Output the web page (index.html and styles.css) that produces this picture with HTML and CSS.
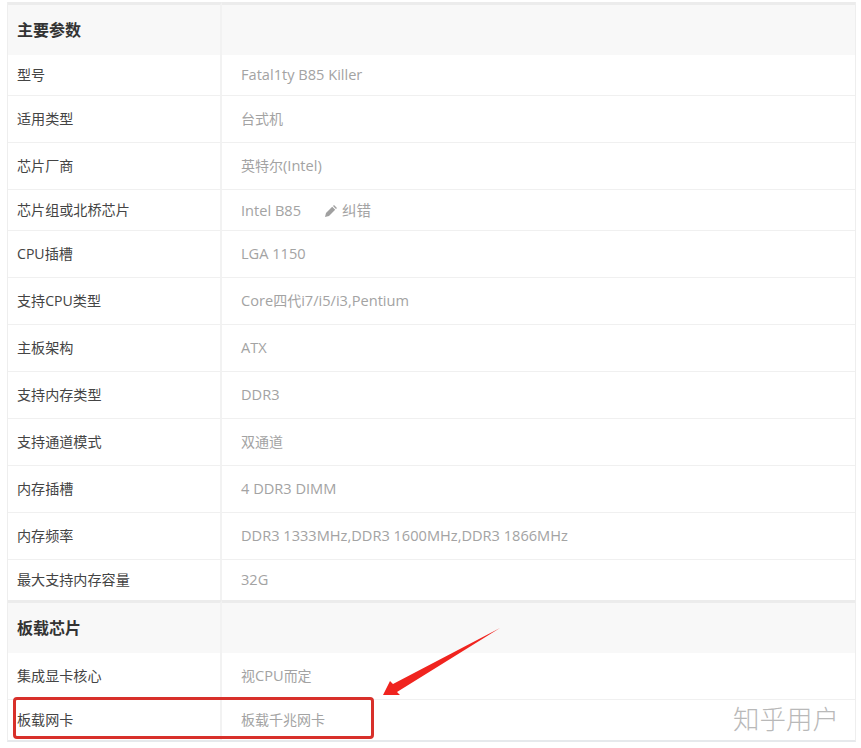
FILE: index.html
```html
<!DOCTYPE html>
<html lang="zh-CN">
<head>
<meta charset="utf-8">
<title>主要参数</title>
<link rel="stylesheet" href="styles.css">
</head>
<body>
<div class="sheet">
  <table class="spec">
    <tbody class="group">
      <tr class="head"><th>主要参数</th><td></td></tr>
      <tr class="h41"><th>型号</th><td>Fatal1ty B85 Killer</td></tr>
      <tr class="h47"><th>适用类型</th><td><span class="cn">台式机</span></td></tr>
      <tr class="h47"><th>芯片厂商</th><td><span class="cn">英特尔</span>(Intel)</td></tr>
      <tr class="h41"><th>芯片组或北桥芯片</th><td>Intel B85<span class="fix"><svg class="pen" viewBox="0 0 12 12" width="12" height="12"><path d="M0 12l1-4 6.2-6.2 3 3L4 11zM8 1l1-1 3 3-1 1z" fill="#a0a0a0"/></svg><span class="cn">纠错</span></span></td></tr>
      <tr class="h47"><th>CPU插槽</th><td>LGA 1150</td></tr>
      <tr class="h47"><th>支持CPU类型</th><td>Core<span class="cn">四代</span>i7/i5/i3,Pentium</td></tr>
      <tr class="h47"><th>主板架构</th><td>ATX</td></tr>
      <tr class="h47"><th>支持内存类型</th><td>DDR3</td></tr>
      <tr class="h47"><th>支持通道模式</th><td><span class="cn">双通道</span></td></tr>
      <tr class="h47"><th>内存插槽</th><td>4 DDR3 DIMM</td></tr>
      <tr class="h47"><th>内存频率</th><td>DDR3 1333MHz,DDR3 1600MHz,DDR3 1866MHz</td></tr>
      <tr class="h41 last"><th>最大支持内存容量</th><td>32G</td></tr>
    </tbody>
    <tbody class="group">
      <tr class="head"><th>板载芯片</th><td></td></tr>
      <tr class="h47"><th>集成显卡核心</th><td><span class="cn">视</span>CPU<span class="cn">而定</span></td></tr>
      <tr class="h41 last"><th>板载网卡</th><td><span class="cn">板载千兆网卡</span></td></tr>
    </tbody>
  </table>
  <div class="mark"></div>
  <svg class="arrow" viewBox="0 0 861 748" width="861" height="748"><polygon points="500,628 393,684 390,681 383,695 400,695 397,692" fill="#f0241f"/></svg>
  <div class="watermark">知乎用户</div>
</div>
</body>
</html>
```
FILE: styles.css
```css
html, body {
  margin: 0;
  padding: 0;
  background: #fff;
}
body {
  width: 861px;
  height: 748px;
  overflow: hidden;
  font-family: "Open Sans", "Noto Sans CJK SC", sans-serif;
}
.sheet {
  position: relative;
  width: 861px;
  height: 748px;
  padding: 2px 0 0 7px;
  box-sizing: border-box;
}
.spec {
  width: 849px;
  table-layout: fixed;
  border-collapse: separate;
  border-spacing: 0;
  border-left: 1px solid #eeeeee;
  border-right: 1px solid #eeeeee;
  border-bottom: 2px solid #e6e9ec;
}
.spec th {
  width: 214px;
  box-sizing: border-box;
  padding: 0 0 2px 9px;
  text-align: left;
  font-weight: 400;
  font-size: 14.1px;
  color: #444;
  border-right: 2px solid #f2f2f2;
  border-bottom: 1px solid #f0f0f0;
}
.spec td {
  padding: 0 0 2px 19px;
  font-size: 14.6px;
  color: #a3a3a3;
  border-bottom: 1px solid #f0f0f0;
}
.cn {
  font-size: 14px;
}
.h41 th, .h41 td { height: 38px; }
.h47 th, .h47 td { height: 44px; }
.head th, .head td {
  height: 48px;
  background: #f8f8f8;
  border-top: 3px solid #ececec;
  border-bottom: 0;
}
.head th {
  font-size: 16px;
  font-weight: 700;
  color: #333;
}
.last th, .last td { border-bottom: 0; }
.fix {
  margin-left: 24px;
  color: #a3a3a3;
}
.pen {
  margin-right: 5px;
  vertical-align: -1px;
}
.fix .cn {
  font-size: 14.5px;
}
.mark {
  position: absolute;
  left: 13px;
  top: 697px;
  width: 361px;
  height: 42px;
  box-sizing: border-box;
  border: 3px solid #d8302a;
  border-radius: 4px;
}
.arrow {
  position: absolute;
  left: 0;
  top: 0;
}
.watermark {
  position: absolute;
  left: 733px;
  top: 699px;
  font-size: 26.5px;
  line-height: 38px;
  font-weight: 300;
  color: #b9b9b9;
  font-family: "Noto Sans CJK SC", sans-serif;
}
```
